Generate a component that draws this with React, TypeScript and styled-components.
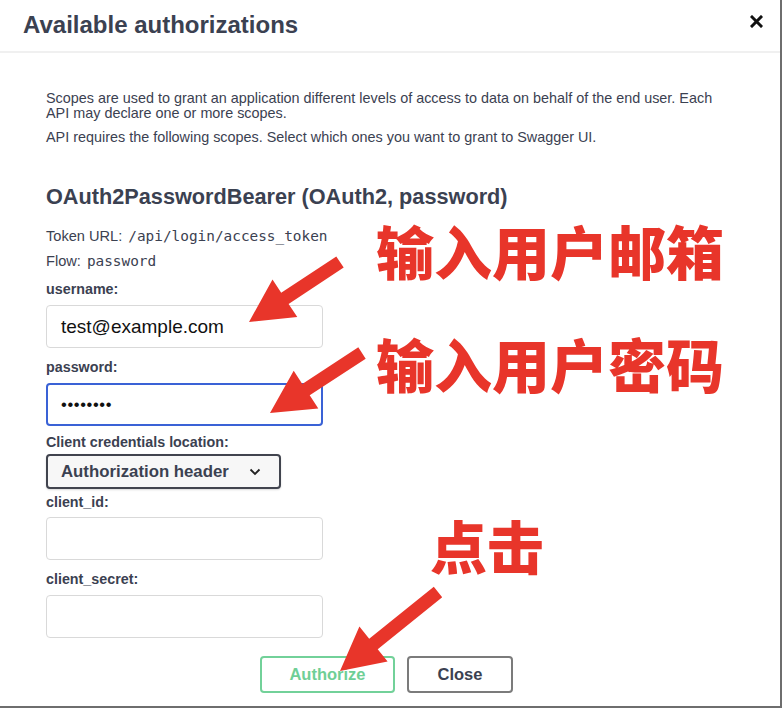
import React from "react";
import styled, { createGlobalStyle } from "styled-components";

const GlobalStyle = createGlobalStyle`
  html, body { margin: 0; padding: 0; background: #ffffff; }
  body { font-family: "Liberation Sans", Arial, sans-serif; color: #3b4151; }
  * { box-sizing: border-box; }
`;

const Modal = styled.div`
  position: relative;
  width: 782px;
  height: 708px;
  background: #fff;
  border-right: 2px solid #6e6e6e;
  border-bottom: 2px solid #6e6e6e;
  overflow: hidden;
`;

const Header = styled.div`
  height: 53px;
  display: flex;
  align-items: center;
  justify-content: space-between;
  padding: 0 17px 0 23px;
  border-bottom: 2px solid #f0f0f0;
`;

const Title = styled.h3`
  margin: 0 0 2px 0;
  font-size: 24px;
  font-weight: 700;
  color: #3b4151;
  letter-spacing: 0;
`;

const CloseX = styled.button`
  border: none;
  background: none;
  padding: 0;
  margin-bottom: 8px;
  width: 14px;
  height: 14px;
  display: flex;
  align-items: center;
  justify-content: center;
  cursor: pointer;
`;

const Body = styled.div`
  padding: 38px 46px 0 46px;
  display: flex;
  flex-direction: column;
`;

const Para = styled.p<{ $mt?: number }>`
  margin: ${(p) => p.$mt ?? 0}px 0 0 0;
  font-size: 14.4px;
  line-height: 15px;
  color: #3b4151;
  white-space: nowrap;
`;

const SchemeTitle = styled.h4`
  margin: 39px 0 0 0;
  font-size: 21.7px;
  line-height: 26px;
  font-weight: 700;
  color: #3b4151;
`;

const Meta = styled.div<{ $mt: number }>`
  margin-top: ${(p) => p.$mt}px;
  font-size: 14.6px;
  line-height: 16px;
  color: #3b4151;
  display: flex;
  align-items: baseline;
  gap: 6px;
`;

const Code = styled.code`
  font-family: "DejaVu Sans Mono", "Liberation Mono", monospace;
  font-size: 14.4px;
  color: #3b4151;
  font-weight: 400;
`;

const Label = styled.label<{ $mt: number }>`
  display: block;
  margin-top: ${(p) => p.$mt}px;
  font-size: 14.3px;
  line-height: 16px;
  font-weight: 700;
  color: #3b4151;
`;

const Input = styled.div<{ $focus?: boolean; $mt: number }>`
  margin-top: ${(p) => p.$mt}px;
  width: 277px;
  height: 43px;
  border-radius: 4px;
  border: ${(p) => (p.$focus ? "2px solid #3a62d6" : "1px solid #d9d9d9")};
  background: #fff;
  display: flex;
  align-items: center;
  padding-left: ${(p) => (p.$focus ? 13 : 14)}px;
  font-size: 19px;
  color: #111;
`;

const Dots = styled.span`
  font-size: 16.5px;
  letter-spacing: 0.6px;
  color: #111;
`;

const Select = styled.div`
  margin-top: 4px;
  width: 235px;
  height: 35px;
  border-radius: 4px;
  border: 2px solid #41444e;
  background: #f7f7f7;
  display: flex;
  align-items: center;
  justify-content: space-between;
  padding: 0 18px 0 13px;
  font-size: 16.8px;
  font-weight: 700;
  color: #3b4151;
  box-shadow: 0 1px 2px rgba(0, 0, 0, 0.15);
`;

const Buttons = styled.div`
  margin-top: 18px;
  display: flex;
  gap: 12px;
  padding-left: 214px;
`;

const Btn = styled.button<{ $green?: boolean; $w: number }>`
  width: ${(p) => p.$w}px;
  height: 37px;
  border-radius: 4px;
  background: #fff;
  border: 2px solid ${(p) => (p.$green ? "#72d199" : "#7b7b7b")};
  color: ${(p) => (p.$green ? "#6fcf96" : "#3b4151")};
  font-family: "Liberation Sans", Arial, sans-serif;
  font-size: 16.5px;
  font-weight: 700;
  padding: 0;
  cursor: pointer;
`;

const Annotation = styled.div<{ $x: number; $y: number; $size: number }>`
  position: absolute;
  left: ${(p) => p.$x}px;
  top: ${(p) => p.$y}px;
  font-family: "Noto Sans CJK SC", "Noto Sans CJK JP", sans-serif;
  font-weight: 900;
  font-size: ${(p) => p.$size}px;
  line-height: 1;
  color: #e8352a;
  white-space: nowrap;
  pointer-events: none;
`;

const Overlay = styled.svg`
  position: absolute;
  left: 0;
  top: 0;
  pointer-events: none;
`;

type Pt = [number, number];

function arrowPoints(tail: Pt, tip: Pt, shaft: number, headLen: number, headW: number): string {
  const dx = tip[0] - tail[0];
  const dy = tip[1] - tail[1];
  const len = Math.hypot(dx, dy);
  const ux = dx / len;
  const uy = dy / len;
  const px = -uy;
  const py = ux;
  const base: Pt = [tip[0] - ux * headLen, tip[1] - uy * headLen];
  const s = shaft / 2;
  const h = headW / 2;
  const pts: Pt[] = [
    [tail[0] + px * s, tail[1] + py * s],
    [base[0] + px * s, base[1] + py * s],
    [base[0] + px * h, base[1] + py * h],
    tip,
    [base[0] - px * h, base[1] - py * h],
    [base[0] - px * s, base[1] - py * s],
    [tail[0] - px * s, tail[1] - py * s],
  ];
  return pts.map((p) => `${p[0].toFixed(1)},${p[1].toFixed(1)}`).join(" ");
}

const arrows: { tail: Pt; tip: Pt }[] = [
  { tail: [340, 262], tip: [249, 322] },
  { tail: [362, 353], tip: [270, 413] },
  { tail: [438, 592], tip: [340, 671] },
];

export default function App() {
  return (
    <>
      <GlobalStyle />
      <Modal>
        <Header>
          <Title>Available authorizations</Title>
          <CloseX aria-label="close">
            <svg width="13" height="13" viewBox="0 0 13 13">
              <path d="M2 2 L11 11 M11 2 L2 11" stroke="#111" strokeWidth="3" strokeLinecap="square" />
            </svg>
          </CloseX>
        </Header>
        <Body>
          <Para>
            Scopes are used to grant an application different levels of access to data on behalf of the end user. Each
            <br />
            API may declare one or more scopes.
          </Para>
          <Para $mt={9}>API requires the following scopes. Select which ones you want to grant to Swagger UI.</Para>
          <SchemeTitle>OAuth2PasswordBearer (OAuth2, password)</SchemeTitle>
          <Meta $mt={18}>
            Token URL: <Code>/api/login/access_token</Code>
          </Meta>
          <Meta $mt={9}>
            Flow: <Code>password</Code>
          </Meta>
          <Label $mt={12}>username:</Label>
          <Input $mt={8}>test@example.com</Input>
          <Label $mt={11}>password:</Label>
          <Input $mt={8} $focus>
            <Dots>••••••••</Dots>
          </Input>
          <Label $mt={8}>Client credentials location:</Label>
          <Select>
            <span>Authorization header</span>
            <svg width="12" height="8" viewBox="0 0 12 8">
              <path d="M1.5 1.5 L6 6 L10.5 1.5" fill="none" stroke="#222" strokeWidth="1.8" />
            </svg>
          </Select>
          <Label $mt={5}>client_id:</Label>
          <Input $mt={7} />
          <Label $mt={11}>client_secret:</Label>
          <Input $mt={8} />
          <Buttons>
            <Btn $green $w={135}>Authorize</Btn>
            <Btn $w={106}>Close</Btn>
          </Buttons>
        </Body>
        <Overlay width="782" height="710" viewBox="0 0 782 710">
          {arrows.map((a, i) => (
            <polygon key={i} points={arrowPoints(a.tail, a.tip, 13.5, 43, 45)} fill="#e8352a" />
          ))}
        </Overlay>
        <Annotation $x={376} $y={221} $size={58}>输入用户邮箱</Annotation>
        <Annotation $x={376} $y={334} $size={58}>输入用户密码</Annotation>
        <Annotation $x={430} $y={516} $size={57}>点击</Annotation>
      </Modal>
    </>
  );
}
